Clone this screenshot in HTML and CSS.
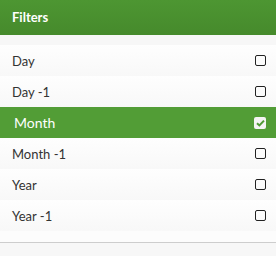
FILE: index.html
```html
<!DOCTYPE html>
<html>
<head>
  <title>Filters</title>
  <link rel="stylesheet" href="styles.css">
</head>
<body>
  <div class="filters">
    <div class="filters-head">Filters</div>
    <ul class="filters-list">
      <li class="filter"><span>Day</span><span class="box"></span></li>
      <li class="filter"><span>Day -1</span><span class="box"></span></li>
      <li class="filter active"><span>Month</span><span class="box checked"><svg width="9" height="8" viewBox="0 0 9 8"><path d="M1 4.2 L3.4 6.4 L8 1.6" fill="none" stroke="#4f9a35" stroke-width="2"/></svg></span></li>
      <li class="filter"><span>Month -1</span><span class="box"></span></li>
      <li class="filter"><span>Year</span><span class="box"></span></li>
      <li class="filter"><span>Year -1</span><span class="box"></span></li>
    </ul>
  </div>
</body>
</html>
```

FILE: styles.css
```css
* {
  margin: 0;
  padding: 0;
  box-sizing: border-box;
}
body {
  font-family: Lato, "Open Sans", sans-serif;
  font-size: 13px;
  color: #333;
  background: #f7f7f7;
}
.filters {
  width: 276px;
  height: 256px;
  background: #f7f7f7;
}
.filters-head {
  height: 35px;
  padding: 9px 12px 0;
  font-weight: bold;
  color: #fff;
  background: linear-gradient(#4d9632, #468a2c);
}
.filters-list {
  list-style: none;
  margin-top: 10px;
  padding-bottom: 11px;
  border-bottom: 1px solid #cdcdcd;
  background: #fcfcfc;
}
.filter {
  height: 31px;
  display: flex;
  align-items: center;
  justify-content: space-between;
  padding: 0 10px 0 12px;
  background: linear-gradient(#fefefe, #f8f8f8);
}
.filter.active {
  color: #fff;
  font-size: 14px;
  padding-left: 14px;
  background: #529d36;
}
.box {
  width: 11px;
  height: 11px;
  border: 1.5px solid #222;
  border-radius: 2px;
  display: flex;
  align-items: center;
  justify-content: center;
}
.box.checked {
  width: 12px;
  height: 12px;
  border: none;
  background: #f4f4f4;
}
```
